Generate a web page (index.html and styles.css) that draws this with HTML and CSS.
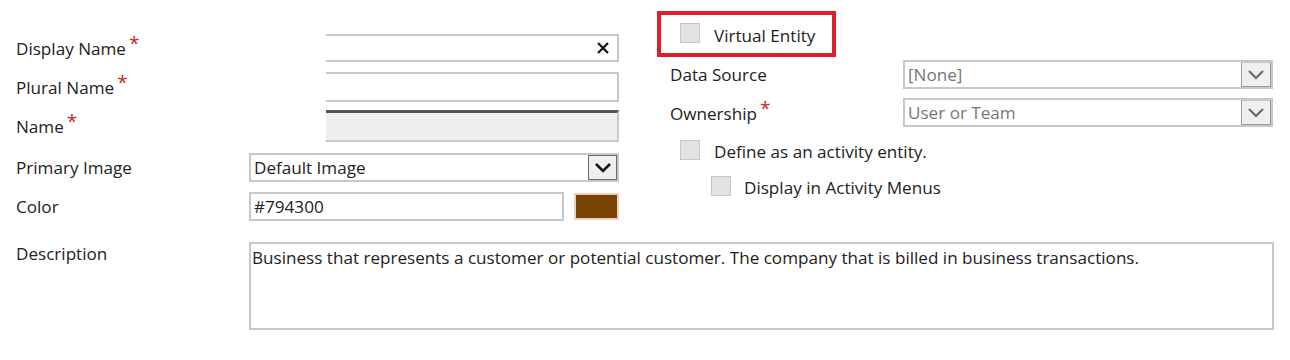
FILE: index.html
```html
<!DOCTYPE html>
<html lang="en">
<head>
<meta charset="utf-8">
<title>Entity form</title>
<link rel="stylesheet" href="styles.css">
</head>
<body>
<div class="form">
  <div class="top">
    <div class="left">
      <div class="row row1">
        <div class="lbl">Display Name<span class="req">*</span></div>
        <div class="input short"><svg class="clear" width="12" height="12" viewBox="0 0 12 12"><path d="M1 1 L11 11 M11 1 L1 11" stroke="#111" stroke-width="2.2"/></svg></div>
      </div>
      <div class="row row2">
        <div class="lbl">Plural Name<span class="req">*</span></div>
        <div class="input short"></div>
      </div>
      <div class="row row3">
        <div class="lbl">Name<span class="req">*</span></div>
        <div class="input short locked"></div>
      </div>
      <div class="row row4">
        <div class="lbl">Primary Image</div>
        <div class="select wide">
          <span class="sel-text">Default Image</span>
          <span class="dd dark"><svg width="18" height="12" viewBox="0 0 18 12"><path d="M2 2 L9 9 L16 2" fill="none" stroke="#111" stroke-width="2.6"/></svg></span>
        </div>
      </div>
      <div class="row row5">
        <div class="lbl">Color</div>
        <div class="input color-input"><span class="val">#794300</span></div>
        <div class="swatch"></div>
      </div>
    </div>
    <div class="right">
      <div class="highlight">
        <span class="cb"></span><span class="cb-text">Virtual Entity</span>
      </div>
      <div class="rrow rrow1">
        <div class="rlbl">Data Source</div>
        <div class="select rsel">
          <span class="sel-text muted">[None]</span>
          <span class="dd"><svg width="18" height="12" viewBox="0 0 18 12"><path d="M2 2 L9 9 L16 2" fill="none" stroke="#666" stroke-width="2"/></svg></span>
        </div>
      </div>
      <div class="rrow rrow2">
        <div class="rlbl">Ownership<span class="req">*</span></div>
        <div class="select rsel">
          <span class="sel-text muted">User or Team</span>
          <span class="dd"><svg width="18" height="12" viewBox="0 0 18 12"><path d="M2 2 L9 9 L16 2" fill="none" stroke="#666" stroke-width="2"/></svg></span>
        </div>
      </div>
      <div class="cbrow cbrow1"><span class="cb"></span><span class="cb-text">Define as an activity entity.</span></div>
      <div class="cbrow cbrow2"><span class="cb"></span><span class="cb-text">Display in Activity Menus</span></div>
    </div>
  </div>
  <div class="desc-row">
    <div class="lbl desc-lbl">Description</div>
    <div class="textarea">Business that represents a customer or potential customer. The company that is billed in business transactions.</div>
  </div>
</div>
</body>
</html>
```
FILE: styles.css
```css
* { box-sizing: border-box; }
html, body { margin: 0; padding: 0; background: #fff; }
body {
  font-family: "Open Sans", "Noto Sans", sans-serif;
  font-size: 17.1px;
  color: #222;
  width: 1290px;
  height: 360px;
  overflow: hidden;
}
.top {
  display: grid;
  grid-template-columns: 657px 1fr;
}
.left { padding-left: 16px; padding-top: 34px; }
.row { display: flex; align-items: center; }
.lbl { width: 233px; flex: none; white-space: nowrap; }
.req { color: #c4262e; margin-left: 3px; position: relative; top: -5px; font-size: 19px; }
.row1 { height: 28px; }
.row2 { height: 30px; margin-top: 10px; }
.row3 { height: 32px; margin-top: 8px; }
.row4 { height: 29px; margin-top: 11px; }
.row5 { height: 29px; margin-top: 10px; }

.input {
  height: 100%;
  border: 2px solid #c8c8c8;
  background: #fff;
  display: flex;
  align-items: center;
}
.short {
  margin-left: 77px;
  width: 293px;
  border-left: none;
  justify-content: flex-end;
}
.clear { margin-right: 8px; }
.locked { background: #efefef; border-top: 3px solid #555; }
.color-input { width: 315px; padding-left: 3px; }
.swatch {
  width: 45px; height: 27px; margin-left: 10px;
  background: #794300;
  border: 2px solid #e6d3c2;
}
.select {
  height: 100%;
  border: 2px solid #c8c8c8;
  display: flex;
  align-items: center;
  justify-content: space-between;
  background: #fff;
}
.wide { width: 370px; padding-left: 3px; }
.sel-text { white-space: nowrap; }
.muted { color: #777; }
.dd {
  width: 30px; height: 100%;
  background: #efefef;
  border: 1px solid #9a9a9a;
  border-top-color: #c8c8c8;
  display: flex; align-items: center; justify-content: center;
}
.dd.dark { border-color: #6a6a6a; width: 29px; }

.right { padding-top: 11px; }
.highlight {
  width: 179px; height: 46px;
  border: 4px solid #dc1f2a;
  display: flex; align-items: center;
  padding-left: 19px;
}
.cb {
  width: 20px; height: 20px; flex: none;
  background: #e2e2e2;
  border: 1px solid #c6c6c6;
}
.cb-text { margin-left: 14px; white-space: nowrap; }
.highlight .cb { margin-top: -2px; }
.highlight .cb-text { margin-top: 3px; }
.rrow { display: flex; align-items: center; padding-left: 13px; }
.rlbl { width: 233px; flex: none; white-space: nowrap; }
.rsel { width: 370px; padding-left: 3px; }
.rrow1 { height: 29px; margin-top: 3px; }
.rrow2 { height: 29px; margin-top: 9px; }
.cbrow { display: flex; align-items: flex-start; }
.cbrow .cb-text { margin-top: 1px; line-height: 22px; }
.cbrow1 { margin-top: 13px; padding-left: 23px; }
.cbrow2 { margin-top: 13px; padding-left: 54px; }
.cbrow2 .cb-text { margin-left: 13px; }

.desc-row { display: flex; padding-left: 16px; margin-top: 21px; }
.desc-lbl { padding-top: 0; }
.textarea {
  width: 1025px; height: 88px;
  border: 2px solid #c8c8c8;
  padding: 2px 0 0 1px;
  white-space: nowrap;
}
```
